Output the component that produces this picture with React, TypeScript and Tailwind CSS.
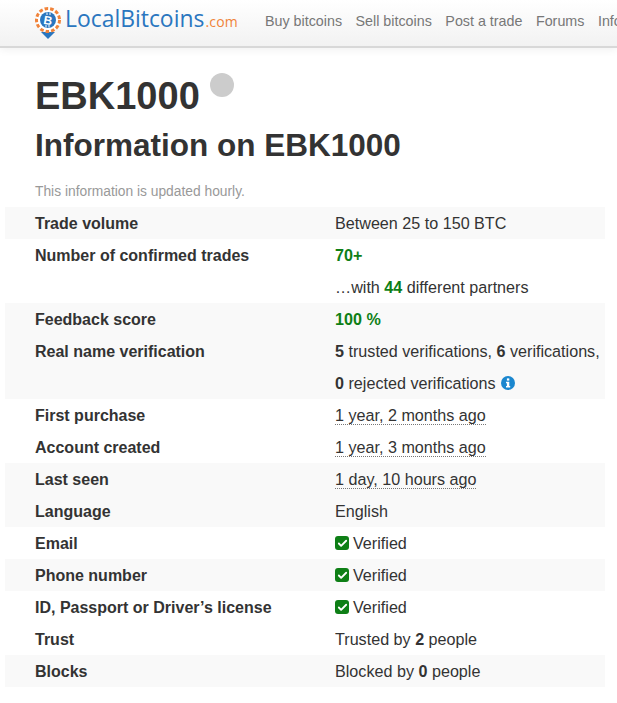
import { Check } from "lucide-react";
import type { ReactNode } from "react";

function Logo() {
  return (
    <svg width="26" height="32" viewBox="0 0 26 32" className="shrink-0">
      <path d="M6 25 L20 25 L13 32 Z" fill="#2a76bf" />
      <circle cx="13" cy="13" r="11.5" fill="#fff" stroke="#f0833a" strokeWidth="3" strokeDasharray="3.6 2" />
      <circle cx="13" cy="13" r="8" fill="#2a76bf" />
      <text x="13" y="17.5" textAnchor="middle" fontSize="12" fontWeight="700" fill="#fff" transform="rotate(10 13 13)" fontFamily="Liberation Sans, sans-serif">
        B
      </text>
      <path d="M12 5.5 V8 M15 5.5 V8 M11 18 V20.5 M14 18 V20.5" stroke="#fff" strokeWidth="1" />
    </svg>
  );
}

function InfoIcon() {
  return (
    <svg width="14" height="14" viewBox="0 0 14 14">
      <circle cx="7" cy="7" r="7" fill="#1b87cf" />
      <rect x="5.9" y="2.4" width="2.4" height="2.2" fill="#fff" />
      <path d="M5 5.7 H8.3 V10 H9.2 V11.5 H5 V10 H5.9 V7.2 H5 Z" fill="#fff" />
    </svg>
  );
}

function Verified() {
  return (
    <span className="flex items-center gap-1">
      <span className="flex h-[14px] w-[14px] items-center justify-center rounded-[3px] bg-[#0e7f16]">
        <Check size={11} color="#fff" strokeWidth={4} />
      </span>
      Verified
    </span>
  );
}

function Ago({ children }: { children: ReactNode }) {
  return <span className="border-b border-dotted border-[#777] leading-[19px]">{children}</span>;
}

function Row({ label, shaded, children }: { label?: string; shaded?: boolean; children: ReactNode }) {
  return (
    <div className={`flex h-8 items-center pl-[30px] pt-[2px] ${shaded ? "bg-[#f9f9f9]" : ""}`}>
      <div className="w-[300px] shrink-0 font-bold leading-6">{label}</div>
      <div className="mb-[2px] whitespace-nowrap text-[16.15px] leading-6">{children}</div>
    </div>
  );
}

export default function App() {
  return (
    <div className="h-[703px] w-[617px] overflow-hidden bg-white font-['Liberation_Sans',sans-serif] text-[16px] text-[#333]">
      <header className="flex h-12 items-center overflow-hidden border-b-2 border-[#d8d8d8] bg-gradient-to-b from-white to-[#f2f2f2] pb-1 pl-[35px] shadow-[0_2px_8px_rgba(0,0,0,0.06)]">
        <div className="mt-1">
          <Logo />
        </div>
        <div className="mb-1 ml-1 flex items-baseline whitespace-nowrap font-['Open_Sans',sans-serif]">
          <span className="text-[22.9px] font-medium text-[#2a76bf]">LocalBitcoins</span>
          <span className="ml-[1px] text-[14px] tracking-[0.2px] text-[#f0833a]">.com</span>
        </div>
        <nav className="ml-[27px] mt-[2px] flex gap-[13.5px] whitespace-nowrap text-[14.3px] text-[#777]">
          <span>Buy bitcoins</span>
          <span>Sell bitcoins</span>
          <span>Post a trade</span>
          <span>Forums</span>
          <span>Information</span>
        </nav>
      </header>

      <main className="pt-[24px]">
        <div className="pl-[35px]">
          <div className="flex items-start">
            <h1 className="text-[38px] font-bold leading-[48px]">EBK1000</h1>
            <span className="ml-[10px] mt-[1px] h-6 w-6 rounded-full bg-[#cccccc]" />
          </div>
          <h2 className="mt-[1px] text-[31.5px] font-bold leading-[48px]">Information on EBK1000</h2>
          <p className="mt-[13px] text-[13.8px] leading-[20px] text-[#999]">This information is updated hourly.</p>
        </div>

        <div className="ml-[5px] mt-[5px] w-[600px]">
          <Row label="Trade volume" shaded>Between 25 to 150 BTC</Row>
          <Row label="Number of confirmed trades"><b className="text-[#0e7f16]">70+</b></Row>
          <Row>…with <b className="text-[#0e7f16]">44</b> different partners</Row>
          <Row label="Feedback score" shaded><b className="text-[#0e7f16]">100 %</b></Row>
          <Row label="Real name verification" shaded><b>5</b> trusted verifications, <b>6</b> verifications,</Row>
          <Row shaded>
            <span className="flex items-center gap-[5px]">
              <span><b>0</b> rejected verifications</span>
              <InfoIcon />
            </span>
          </Row>
          <Row label="First purchase"><Ago>1 year, 2 months ago</Ago></Row>
          <Row label="Account created"><Ago>1 year, 3 months ago</Ago></Row>
          <Row label="Last seen" shaded><Ago>1 day, 10 hours ago</Ago></Row>
          <Row label="Language" shaded>English</Row>
          <Row label="Email"><Verified /></Row>
          <Row label="Phone number" shaded><Verified /></Row>
          <Row label="ID, Passport or Driver’s license"><Verified /></Row>
          <Row label="Trust">Trusted by <b>2</b> people</Row>
          <Row label="Blocks" shaded>Blocked by <b>0</b> people</Row>
        </div>
      </main>
    </div>
  );
}
